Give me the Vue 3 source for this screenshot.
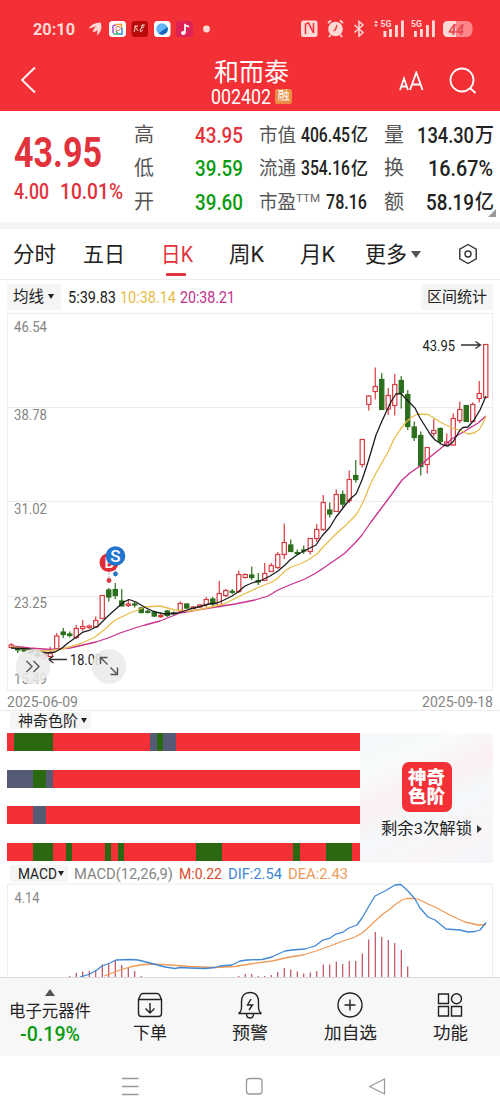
<template>
  <div class="stock-page">
    <header class="top">
      <div class="status">
        <Fit class="clock" t="20:10" :w="42" :s="17" />
        <svg class="status-left" width="126" height="20" viewBox="86 19 126 20">
          <g fill="#ffd9d6">
            <path d="M88.500 28.500q4-6 12-6q-4 5-12 6zM92.500 31.500q3-6 8.500-9q0 7-6.500 9.500zM97 35.500q0-7 4-12q2 7-4 12z" />
            <circle cx="206.500" cy="29" r="3.400" />
          </g>
          <rect x="109" y="21" width="17" height="16" rx="3.500" fill="#fff" />
          <path d="M113 33v-7l3-1.500" fill="none" stroke="#a95ad8" stroke-width="1.600" />
          <path d="M115 24.500h6.500v4" fill="none" stroke="#f2a13a" stroke-width="1.600" />
          <path d="M122 28v6h-4" fill="none" stroke="#3f8be8" stroke-width="1.600" />
          <path d="M113 34h5l-2-3" fill="none" stroke="#45b56b" stroke-width="1.600" />
          <circle cx="118" cy="28.500" r="2.200" fill="none" stroke="#e68065" />
          <rect x="131.500" y="21" width="16.500" height="16" rx="3.500" fill="#b90b0e" />
          <path d="M134 27l4-1m-2-1l-2 7m2-4l2 3m3-5l4-1m-2-1l-3 7m2-3l2-1m-4 5l3-2" stroke="#f3cfc4" fill="none" />
          <rect x="154" y="21" width="16.500" height="16" rx="3.500" fill="#fff" />
          <circle cx="162" cy="29" r="5.800" fill="#64b5f7" />
          <path d="M167.500 27a5.800 5.800 0 0 1-9 6.500z" fill="#1764bd" />
          <rect x="176" y="21" width="17" height="16" rx="3.500" fill="#dc2353" />
          <path d="M185 33v-8q3 2 4 1" fill="none" stroke="#fff" stroke-width="1.700" />
          <ellipse cx="183.300" cy="33" rx="2.300" ry="2" fill="#fff" />
        </svg>
        <svg class="status-right" width="176" height="22" viewBox="299 17 176 22">
          <rect x="301" y="20.500" width="16.500" height="16.500" rx="2.500" fill="#ffd9d6" />
          <path d="M305.500 34v-10l3-1l5 10v-10" fill="none" stroke="#f23036" stroke-width="1.500" />
          <circle cx="335.500" cy="29" r="7.300" fill="#ffd9d6" />
          <path d="M328 23l3-2.500m12 2.500l-3-2.500M330.500 35l-1.500 2m11.500-2l1.500 2" stroke="#ffd9d6" stroke-width="2" />
          <path d="M337 25l-1.500 4.500l-2 1.500" fill="none" stroke="#f23036" stroke-width="1.300" />
          <path d="M354.500 25l8.500 7.500l-4 3.500V21.500l4 3.500l-8.500 7.500" fill="none" stroke="#ffd9d6" stroke-width="1.500" />
          <g fill="#ffd9d6">
            <path d="M374 23l2-2.500l2 2.500zM374 24.500l2 2.500l2-2.500z" />
            <text x="380.500" y="27" font-size="9" font-weight="700" textLength="11" lengthAdjust="spacingAndGlyphs">5G</text>
            <text x="411" y="27" font-size="9" font-weight="700" textLength="11" lengthAdjust="spacingAndGlyphs">5G</text>
            <rect v-for="b in signalBars" :key="b.x" :x="b.x" :y="b.y" width="2.900" :height="37 - b.y" />
          </g>
          <rect x="443" y="21" width="29.500" height="16" rx="6" fill="#ff878a" />
          <path d="M456 21h-8q-5 0-5 5v6q0 5 5 5h8z" fill="#ffd9d6" />
          <text x="448.500" y="34.500" font-size="14" font-weight="700" font-style="italic" fill="#e84a50">44</text>
        </svg>
      </div>
      <div class="nav">
        <svg width="18" height="30" viewBox="0 0 18 30" class="line-icon">
          <path d="M15 2.500L2 15l13 12.500" />
        </svg>
        <div class="stock-title">
          <Fit t="和而泰" :w="75" :s="24.500" />
          <div class="code">
            <Fit t="002402" :w="60" :s="20" />
            <span class="tag">融</span>
          </div>
        </div>
        <div class="nav-actions">
          <svg width="25" height="20" viewBox="0 0 25 20" class="line-icon">
            <path d="M1 19L5 7.500L9 19M2.300 15.500h5.500M11 19L17.300 1.500L23.600 19M13 13.500h8.600" />
          </svg>
          <svg width="28" height="28" viewBox="0 0 28 28" class="line-icon">
            <circle cx="13" cy="13" r="11.500" /><path d="M21.500 21.500l5 4.500" />
          </svg>
        </div>
      </div>
    </header>

    <section class="quote">
      <div class="price up">
        <Fit t="43.95" :w="88" :s="42" class="bold" />
        <div class="change">
          <Fit t="4.00" :w="35" :s="22" class="medium" />
          <Fit t="10.01%" :w="63" :s="22" class="medium" />
        </div>
      </div>
      <div v-for="(col, c) in stats" :key="c" :class="['stat-col', 'stat-col-' + c]">
        <div v-for="s in col" :key="s.label" class="stat">
          <Fit :t="s.label" :w="s.lw" :s="s.lw === 20 ? 20 : 19" class="stat-label" />
          <Fit v-if="s.sup" :t="s.sup" :w="24" :s="11.500" class="sup" />
          <Fit :t="s.value" :w="s.w" :s="s.size" :class="['stat-value', s.tone]" />
          <Fit v-if="s.unit" :t="s.unit" :w="c === 1 ? 17 : 19" :s="c === 1 ? 18 : 20" class="medium" />
        </div>
      </div>
      <i class="fold"></i>
    </section>

    <nav class="tabs">
      <div v-for="tab in tabs" :key="tab.name" :class="['tab', { active: tab.active }]">
        <Fit :t="tab.name" :w="tab.w" :s="21.500" />
      </div>
      <i class="caret big"></i>
      <svg width="20" height="22" viewBox="0 0 20 22" fill="none" stroke="#333" stroke-width="1.400">
        <path d="M10 1.500l8.200 4.600v9.800L10 20.500l-8.200-4.600V6.100z" /><circle cx="10" cy="11" r="3" />
      </svg>
    </nav>

    <div class="ma-row">
      <div class="chip"><Fit t="均线" :w="31" :s="15.500" /><i class="caret"></i></div>
      <Fit t="5:39.83" :w="48" :s="16.500" />
      <Fit t="10:38.14" :w="56" :s="16.500" class="ma10" />
      <Fit t="20:38.21" :w="55" :s="16.500" class="ma20" />
      <div class="chip range"><Fit t="区间统计" :w="60" :s="15" /></div>
    </div>

    <svg class="chart" width="500" height="378" viewBox="0 313 500 378">
      <path d="M7.500 313.500H492.500V690.500H7.500zM7.500 407.500H492.500M7.500 501.500H492.500M7.500 596.500H492.500" fill="none" stroke="#ececec" />
      <g fill="#858585" font-size="14.500">
        <text v-for="l in axis" :key="l.t" x="14" :y="l.y" textLength="33" lengthAdjust="spacingAndGlyphs">{{ l.t }}</text>
      </g>
      <g v-for="(k, i) in candles" :key="i" :class="k[0] ? 'k-up' : 'k-down'">
        <path :d="wick(k, i)" />
        <rect :x="kx(i) - 2.100" :y="k[2]" width="4.200" :height="Math.max(k[3] - k[2], 1)" />
      </g>
      <polyline :points="ma20" class="ma" stroke="#c9308c" />
      <polyline :points="ma10" class="ma" stroke="#e9bd4c" />
      <polyline :points="ma5" class="ma" stroke="#1c1c1c" />
      <g stroke="#333" fill="none" stroke-width="1.300">
        <path d="M461 345h19.500M475.500 341.500l5 3.500l-5 3.500" />
        <path d="M67 659.500H48.500M53.500 656l-5 3.500l5 3.500" />
      </g>
      <text x="422.500" y="350.500" font-size="14.500" fill="#222" textLength="32.500" lengthAdjust="spacingAndGlyphs">43.95</text>
      <text x="70" y="664.500" font-size="14.500" fill="#222" textLength="32" lengthAdjust="spacingAndGlyphs">18.08</text>
      <path d="M109 570v10M115.500 565v8" stroke="#b5a0a8" stroke-dasharray="2 1" />
      <circle cx="109" cy="562.500" r="9.500" fill="#e02d35" />
      <text x="104.500" y="568" font-size="15" font-weight="500" fill="#fff">B</text>
      <circle cx="115.500" cy="556" r="9.800" fill="#1f74cf" />
      <text x="110.300" y="562" font-size="17" font-weight="500" fill="#fff">S</text>
      <circle cx="109" cy="580.500" r="2.400" fill="#dc3b42" />
      <circle cx="115.500" cy="574" r="2.400" fill="#2a74c4" />
      <g fill="#ebebeb" fill-opacity="0.880">
        <circle cx="33" cy="666.500" r="17.300" /><circle cx="109" cy="666.500" r="17.300" />
      </g>
      <g fill="none" stroke="#555" stroke-width="1.400">
        <path d="M26.500 661l5.500 5.500l-5.500 5.500M33.500 661l5.500 5.500l-5.500 5.500" />
        <path d="M107.500 664.500l-7-7M100.500 664v-6.500h7M110.500 667.500l7 7M117.500 667.500v7h-7" />
      </g>
    </svg>

    <div class="dates">
      <Fit t="2025-06-09" :w="71" :s="15" />
      <Fit t="2025-09-18" :w="71" :s="15" />
    </div>

    <section class="levels">
      <div class="chip small levels-chip"><Fit t="神奇色阶" :w="60" :s="15" /><i class="caret"></i></div>
      <div class="levels-body">
        <div class="strips">
          <div v-for="(row, r) in strips" :key="r" class="strip">
            <i v-for="(cell, n) in row" :key="n" :class="cell[0]" :style="{ width: cell[1] * 6.5 + 'px' }"></i>
          </div>
        </div>
        <div class="unlock">
          <div class="badge"><Fit t="神奇" :w="37" :s="18" /><Fit t="色阶" :w="37" :s="18" /></div>
          <div class="unlock-text"><Fit t="剩余3次解锁" :w="91" :s="15.500" /><i class="caret right"></i></div>
        </div>
      </div>
    </section>

    <div class="macd-row">
      <div class="chip small"><Fit t="MACD" :w="39" :s="15" /><i class="caret"></i></div>
      <Fit t="MACD(12,26,9)" :w="99" :s="15.500" class="grey" />
      <Fit t="M:0.22" :w="43" :s="15.500" class="m" />
      <Fit t="DIF:2.54" :w="54" :s="15.500" class="dif" />
      <Fit t="DEA:2.43" :w="60" :s="15.500" class="dea" />
    </div>
    <svg class="chart" width="500" height="94" viewBox="0 883 500 94">
      <path d="M7.500 977V884H492.500V977" fill="none" stroke="#ececec" />
      <text x="14.500" y="903" font-size="14.500" fill="#858585" textLength="25" lengthAdjust="spacingAndGlyphs">4.14</text>
      <rect v-for="b in macdBars" :key="b[0]" :x="kx(b[0]) - 0.500" :y="b[1]" width="1" :height="977 - b[1]" fill="#b02a3a" />
      <polyline :points="dea" class="ma" stroke="#ef9a56" />
      <polyline :points="dif" class="ma" stroke="#4187d4" />
    </svg>

    <footer class="actions">
      <div class="action sector">
        <i class="caret up-caret"></i>
        <Fit t="电子元器件" :w="82" :s="16.500" />
        <Fit t="-0.19%" :w="60" :s="20.500" class="down medium" />
      </div>
      <div v-for="a in actions" :key="a.name" class="action">
        <svg width="28" height="28" viewBox="0 0 28 28" class="action-icon"><path :d="a.icon" /></svg>
        <Fit :t="a.name" :w="a.w" :s="17.500" />
      </div>
    </footer>
    <div class="sysbar">
      <svg width="500" height="61" viewBox="0 1056 500 61" fill="none" stroke="#999" stroke-width="1.300">
        <path d="M122 1078.500h16.500M122 1086.500h16.500M122 1094.500h16.500" />
        <rect x="246.500" y="1078.500" width="15.500" height="15.500" rx="3" />
        <path d="M384.500 1079v15l-15-7.500z" stroke-linejoin="round" />
      </svg>
    </div>
  </div>
</template>

<script setup>
import { h } from 'vue'

// Text squeezed to a fixed width, the box is as tall as the capitals
const Fit = (p) => {
  const cap = Math.round(p.s * 0.72)
  return h('svg', { class: 'fit', width: p.w, height: cap }, [
    h('text', { y: cap, 'font-size': p.s, textLength: p.w, lengthAdjust: 'spacingAndGlyphs' }, p.t)
  ])
}
Fit.props = ['t', 'w', 's']

const signalBars = [
  { x: 383.5, y: 31 }, { x: 389, y: 29 }, { x: 395, y: 25 }, { x: 401, y: 20.5 },
  { x: 414, y: 31 }, { x: 420, y: 29 }, { x: 426, y: 25 }, { x: 432, y: 20.5 }
]

const stats = [
  [
    { label: '高', lw: 20, value: '43.95', w: 48, size: 22.5, tone: 'up' },
    { label: '低', lw: 20, value: '39.59', w: 48, size: 22.5, tone: 'down' },
    { label: '开', lw: 20, value: '39.60', w: 48, size: 22.5, tone: 'down' }
  ],
  [
    { label: '市值', lw: 37, value: '406.45', w: 49, size: 20, unit: '亿' },
    { label: '流通', lw: 37, value: '354.16', w: 49, size: 20, unit: '亿' },
    { label: '市盈', lw: 37, sup: 'TTM', value: '78.16', w: 41, size: 20 }
  ],
  [
    { label: '量', lw: 20, value: '134.30', w: 57, size: 22.5, unit: '万' },
    { label: '换', lw: 20, value: '16.67%', w: 65, size: 22.5 },
    { label: '额', lw: 20, value: '58.19', w: 48, size: 22.5, unit: '亿' }
  ]
]

const tabs = [
  { name: '分时', w: 43 },
  { name: '五日', w: 42 },
  { name: '日K', w: 32, active: true },
  { name: '周K', w: 35 },
  { name: '月K', w: 35 },
  { name: '更多', w: 42 }
]

const axis = [
  { t: '46.54', y: 332 }, { t: '38.78', y: 419.5 }, { t: '31.02', y: 514 },
  { t: '23.25', y: 608 }, { t: '15.49', y: 683.5 }
]

// [rising, high, body top, body bottom, low]
const candles = [
  [1, 643, 645, 647.5, 648], [0, 647, 648, 650, 653], [0, 648, 649, 651, 653], [0, 650, 651, 653, 655],
  [0, 652, 654, 656, 658], [1, 653, 655, 658, 659], [1, 646.7, 653, 656.5, 658.5], [1, 633, 636, 649, 649],
  [0, 628, 632, 634.5, 638], [0, 631.5, 634, 635.5, 637.5], [1, 625, 628.5, 637.5, 639], [1, 620, 626.5, 628.5, 631],
  [1, 624.5, 626, 627.5, 629], [1, 616.5, 620.5, 627, 628], [1, 595, 595.5, 618.5, 619], [0, 588, 590, 597, 601.5],
  [0, 583, 589.5, 595.5, 599], [0, 589, 601, 606, 606], [1, 600, 604, 605.5, 607], [0, 601.5, 604, 605, 607.5],
  [0, 607, 608, 612.5, 613.5], [0, 609.5, 611.3, 612.3, 613.5], [0, 610.5, 612, 616, 617], [1, 613.5, 615.5, 616.7, 618],
  [0, 610, 611, 615.5, 617], [0, 611.5, 613, 614, 615.5], [1, 601.5, 603.5, 611, 612], [0, 603.5, 604, 608, 609],
  [1, 606, 607, 608.5, 609], [1, 604, 605, 607, 608], [1, 597, 599.5, 604.5, 607], [0, 597, 599, 604, 606.5],
  [1, 581, 593.5, 606.5, 607], [1, 589, 590.5, 595.5, 597], [0, 589, 591.3, 592.3, 594], [1, 570.5, 574.5, 591.5, 593],
  [1, 573.5, 574.5, 577.5, 578.5], [0, 566.5, 575, 577.5, 580], [0, 573, 580.5, 582, 585], [1, 563, 573.5, 580.5, 581],
  [1, 563, 565.5, 571.5, 572], [1, 552, 554.5, 567.5, 569], [1, 523.5, 542.5, 554.5, 559], [0, 539.5, 545, 551.5, 552],
  [0, 549.5, 552.5, 553.5, 555], [0, 545.5, 550, 551, 554], [1, 538, 538.5, 551.5, 554.5], [1, 524, 529.5, 538.5, 542],
  [1, 495, 502.5, 529.5, 531], [0, 502.5, 510, 514, 517.5], [1, 489.5, 494.5, 511.5, 512], [0, 490.5, 494.5, 504, 507.5],
  [1, 470.5, 479.5, 500.5, 503], [0, 460, 475.5, 479.5, 482.5], [1, 439, 439.5, 464.5, 467.5], [1, 395, 396, 404.5, 410.5],
  [1, 367.5, 386.5, 391.5, 399.5], [0, 373, 379.5, 409.5, 410], [1, 388, 395.5, 409, 415], [1, 374, 384.5, 405.5, 415.5],
  [0, 376, 380.5, 392.5, 408.5], [0, 390, 394.5, 426.5, 430], [0, 421.5, 427, 437.5, 441], [0, 431.5, 435.5, 466.5, 475.5],
  [1, 447, 447.5, 464.5, 473.5], [1, 419, 430.5, 433.5, 436.5], [0, 427.5, 428.5, 441.5, 444.5], [1, 433.5, 442, 445, 445.5],
  [1, 413.5, 418.5, 445, 446], [1, 401.5, 409.5, 420.5, 423], [0, 405, 405.5, 421.5, 422], [1, 402.5, 404.5, 421.5, 422],
  [1, 381, 393.5, 398.5, 402.5], [1, 344, 344.5, 397.5, 398]
]

const kx = (i) => 11.25 + i * 6.5
const wick = (k, i) => `M${kx(i)} ${k[1]}V${k[2]}M${kx(i)} ${k[3]}V${k[4]}`

const ma5 = '11,648 30,649 40,652 48,653 55,652 62,648 68,643 75,638 83,632 90,630 98,626 108,616 118,607 124,602 129,599.5 136,602 146,608 155,612 165,614 178,613 190,609 200,606.5 209,604 217,603 224,600 232,596 238,592 245,586 252,583 262,580 270,576 278,571 285,565 290,560 297,555 304,551 316,545 322,536 330,527 336,517 343,508 350,499 356,494 362,480 368,462 376,435 382,421 388,408 392,400 396,394 401,393.500 408,401 415,408 420,418 425,426 430,434 435,440 443,445 448,446 453,442 460,430 463,427.500 468,427 474,420 480,410 486,396'
const ma10 = '11,646.500 30,650 47,651 62,649 80,644 95,637 105,629 115,620 130,613 145,607 160,606 175,610 190,611 200,609.500 224,604 240,596 257,588 272,582 278,578 285,571 291,567 300,564 308,560 317,554 323,547 330,540 338,532 345,526 350,521 356,515 360,508 364,500 370,485 376,473 388,452 394,439 400,430 406,422 412,417 418,414 428,414.500 434,418 440,422 452,428 462,431 468,434 474,433 479,430 483,423 486,416'
const ma20 = '11,646 30,648 50,649.500 70,648 96,642 108,638 120,633 135,628 145,625 160,621 170,617 180,613 200,609.500 235,604 255,600 268,596 278,590 292,584 305,579 316,573 325,567 338,558 345,553 355,543 362,535 371,522 380,510 389,498 402,480 410,473 420,466 430,457 440,449 453,438 465,431 478,423 486,416'

const dif = '80,977 90,974 97,970 102,966 110,963 116,960 130,959.500 138,960 150,963 165,967 175,968.500 180,967.500 190,968 205,968.500 215,967.500 220,966 232,965 240,961 247,960 262,959.500 272,957 278,954 285,951 292,950 305,949 315,946 323,940 330,938 336,934 343,932 349,928 357,925 362,918 369,906 375,896 385,891 395,885 401,884.500 408,891 415,899 420,908 428,917 435,920 446,929 460,930 468,932 475,931.500 480,930 486,922.500'
const dea = '104,976 112,973 120,970 130,967 140,965 150,964 170,965 190,966.500 215,967.500 235,966.500 250,964 272,961 290,957 303,955 316,951 330,946 343,941 355,937 362,933 369,927 375,921 383,914 390,909 396,904 402,900 407,898.500 415,898.500 420,900 428,904 435,907 450,915 465,922 478,925 486,924.500'

const macdBars = [
  [9, 976], [10, 973], [11, 971.5], [12, 971], [13, 970], [14, 964.5], [15, 963], [16, 960.5], [17, 965],
  [18, 967.5], [19, 971], [20, 976], [35, 976], [36, 974], [37, 974], [38, 976], [39, 976], [40, 975],
  [41, 972], [42, 968], [43, 969.5], [44, 971.5], [45, 973.5], [46, 972.5], [47, 971], [48, 964.5],
  [49, 964.5], [50, 961.5], [51, 964], [52, 961], [53, 961], [54, 953.5], [55, 939.5], [56, 932],
  [57, 937], [58, 940], [59, 943], [60, 950], [61, 966.5]
]

// r = red, g = green, s = slate, second value is the number of days
const strips = [
  [['r', 1], ['g', 6], ['r', 15], ['s', 1], ['g', 1], ['s', 2], ['r', 28.23]],
  [['s', 4], ['g', 2], ['s', 1], ['r', 47.23]],
  [['r', 4], ['s', 2], ['r', 48.23]],
  [['r', 4], ['g', 3], ['r', 2], ['g', 1], ['r', 5], ['g', 1], ['r', 1], ['g', 1], ['r', 11], ['g', 4], ['r', 11], ['g', 1], ['r', 4], ['g', 4], ['r', 1.23]]
]

const actions = [
  { name: '下单', w: 34, icon: 'M2.500 8.500v14q0 3 3 3h17q3 0 3-3v-14l-2-4.500q-.8-1.500-2.500-1.500H7q-1.700 0-2.500 1.500zh23M14 12v9.500M9.500 17.500l4.500 4.500l4.500-4.500' },
  { name: '预警', w: 36, icon: 'M2.500 22.500q3-1.500 3-7V11q0-9.500 8.500-9.500T22.500 11v4.500q0 5.500 3 7zM10.500 23q0 4 3.500 4t3.500-4M15 8l-3.500 6h5L13 19' },
  { name: '加自选', w: 53, icon: 'M26 14a12 12 0 1 1-24 0a12 12 0 1 1 24 0M14 8.500v11M8.500 14h11' },
  { name: '功能', w: 35, icon: 'M2.500 3h10v9.500h-10zM2.500 15.500h10v9.500h-10zM15.500 15.500h10v9.500h-10zM25.500 7.800a5 5 0 1 1-10 0a5 5 0 1 1 10 0' }
]
</script>

<style>
body {
  margin: 0;
  background: #fff;
}
</style>

<style scoped>
.stock-page {
  width: 500px;
  height: 1117px;
  overflow: hidden;
  background: #fff;
  color: #222;
  font-family: Roboto, "Noto Sans CJK SC", sans-serif;
}

svg {
  display: block;
  flex: none;
}

.fit {
  overflow: visible;
  fill: currentColor;
}

.medium {
  font-weight: 500;
}

.bold {
  font-weight: 700;
}

.up {
  color: #e2323c;
}

.down {
  color: #0a9a0e;
}

/* Header */
.top {
  height: 111px;
  box-sizing: border-box;
  background: #f23036;
  color: #fff;
}

.status {
  display: flex;
  align-items: center;
  height: 58px;
  padding-left: 33px;
}

.clock {
  font-weight: 700;
  color: #ffd9d6;
}

.status-left {
  margin-left: 11px;
}

.status-right {
  margin-left: 87px;
  margin-top: -2px;
}

.nav {
  display: grid;
  grid-template-columns: 191px 120px 1fr;
  height: 50px;
  padding-left: 20px;
}

.nav > svg {
  margin-top: 7px;
}

.stock-title {
  display: flex;
  flex-direction: column;
  padding-top: 5px;
}

.stock-title > .fit {
  margin-left: 3px;
}

.code {
  display: flex;
  align-items: center;
  gap: 4px;
  margin-top: 8px;
}

.tag {
  width: 17px;
  height: 15px;
  border-radius: 2px;
  background: #ea8c43;
  font-size: 12px;
  line-height: 15px;
  text-align: center;
}

.nav-actions {
  display: flex;
  align-items: center;
  gap: 25px;
  padding-left: 68px;
  padding-bottom: 4px;
}

.line-icon {
  fill: none;
  stroke: #fff;
  stroke-width: 1.8;
}

/* Quote numbers */
.quote {
  position: relative;
  display: flex;
  height: 111px;
  border-bottom: 7px solid #f5f5f5;
}

.price {
  width: 120px;
  padding: 26px 0 0 14px;
}

.change {
  display: flex;
  gap: 11px;
  margin-top: 16px;
}

.stat-col {
  display: flex;
  flex-direction: column;
  padding-top: 7px;
}

.stat-col-0 {
  width: 110px;
}

.stat-col-1 {
  width: 109px;
  margin-left: 15px;
}

.stat-col-2 {
  width: 110px;
  margin-left: 16px;
}

.stat {
  display: flex;
  align-items: center;
  height: 33.500px;
}

.stat-label {
  color: #555;
}

.sup {
  color: #666;
  margin-top: -8px;
}

.stat-value {
  margin-left: auto;
  margin-right: 1px;
  font-weight: 500;
}

.fold {
  position: absolute;
  right: 4px;
  bottom: 5px;
  border-left: 8px solid transparent;
  border-bottom: 8px solid #999;
}

/* Period tabs */
.tabs {
  display: grid;
  grid-template-columns: 70px 78px 68px 71px 65px 46px 47px 20px;
  align-items: center;
  height: 50px;
  padding-left: 13px;
  border-bottom: 1px solid #ececec;
}

.tab {
  display: flex;
  flex-direction: column;
  align-items: flex-start;
}

.tab.active {
  color: #e2323c;
}

.tab.active::after {
  content: "";
  width: 20px;
  height: 3px;
  margin: 11px 0 -14px 5px;
  border-radius: 1px;
  background: #e2323c;
}

.caret {
  width: 0;
  height: 0;
  border: 3.500px solid transparent;
  border-top: 5px solid #222;
  border-bottom: 0;
}

.caret.big {
  border-width: 7px 5px 0;
  border-top-color: #555;
}

.caret.right {
  border: 4px solid transparent;
  border-left: 5px solid #333;
  border-right: 0;
}

.caret.up-caret {
  border: 5.500px solid transparent;
  border-bottom: 7px solid #555;
  border-top: 0;
}

/* Moving averages */
.ma-row {
  display: flex;
  align-items: center;
  height: 33px;
  padding: 0 7px;
}

.ma-row > .fit {
  margin-left: 4px;
}

.chip {
  display: flex;
  align-items: center;
  gap: 4px;
  box-sizing: border-box;
  width: 54px;
  height: 26px;
  padding-left: 6px;
  margin-right: 3px;
  border-radius: 2px;
  background: #f5f5f5;
}

.chip.range {
  width: 72px;
  margin-left: auto;
  margin-right: 0;
}

.chip.small {
  width: 58px;
  height: 17px;
  gap: 1px;
  padding-left: 8px;
}

.ma10 {
  color: #e9bd4c;
}

.ma20 {
  color: #c0308c;
}

.ma {
  fill: none;
  stroke-width: 1.3;
  stroke-linejoin: round;
}

.k-up {
  fill: #fff;
  stroke: #d83a40;
  stroke-width: 1.2;
}

.k-down {
  fill: #2b6e1c;
  stroke: #2b6e1c;
  stroke-width: 1.2;
}

.dates {
  display: flex;
  justify-content: space-between;
  align-items: center;
  height: 19px;
  padding: 1px 7px 0;
  box-sizing: border-box;
  margin-bottom: 1px;
  box-shadow: 0 1px #ececec;
  color: #858585;
}

/* Colour levels */
.levels {
  height: 152px;
  padding: 1px 7px 0 7px;
  box-sizing: border-box;
}

.chip.levels-chip {
  width: 81px;
  margin-left: 3px;
  gap: 3px;
}

.levels-body {
  display: flex;
  margin-top: 4px;
}

.strips {
  display: flex;
  flex-direction: column;
  gap: 18.700px;
  width: 353px;
}

.strip {
  display: flex;
  height: 18px;
}

.strip .r {
  background: #f23036;
}

.strip .r:last-child {
  flex: 1;
}

.strip .g {
  background: #2a6812;
}

.strip .s {
  background: #555b74;
}

.unlock {
  display: flex;
  flex-direction: column;
  align-items: center;
  flex: 1;
  height: 130px;
  background: linear-gradient(155deg, #f5f8fa 0%, #f8fafb 25%, #fbeff1 43%, #f5f8fa 58%, #f9f5f8 80%, #f5f5f9 100%);
}

.badge {
  display: flex;
  flex-direction: column;
  align-items: center;
  justify-content: center;
  gap: 6px;
  width: 50px;
  height: 50px;
  margin-top: 29px;
  border-radius: 7px;
  background: #f23036;
  color: #fff;
  font-weight: 900;
}

.unlock-text {
  display: flex;
  align-items: center;
  gap: 5px;
  margin-top: 11px;
  margin-left: 9px;
}

/* MACD */
.macd-row {
  display: flex;
  align-items: center;
  gap: 6px;
  height: 20px;
  padding-left: 10px;
}

.macd-row .chip {
  margin-right: 0;
}

.grey {
  color: #858585;
}

.m {
  color: #d94a2b;
}

.dif {
  color: #4187d4;
}

.dea {
  color: #ef9a56;
}

/* Bottom actions */
.actions {
  display: grid;
  grid-template-columns: repeat(5, 100px);
  box-sizing: border-box;
  height: 79px;
  border-top: 1px solid #d8d8d8;
  background: #f7f7f7;
}

.action {
  display: flex;
  flex-direction: column;
  align-items: center;
  gap: 7px;
  padding-top: 13px;
}

.sector {
  gap: 9px;
  padding-top: 11px;
}

.action-icon {
  fill: none;
  stroke: #222;
  stroke-width: 1.4;
}

.sysbar {
  height: 61px;
  background: #fff;
}
</style>
